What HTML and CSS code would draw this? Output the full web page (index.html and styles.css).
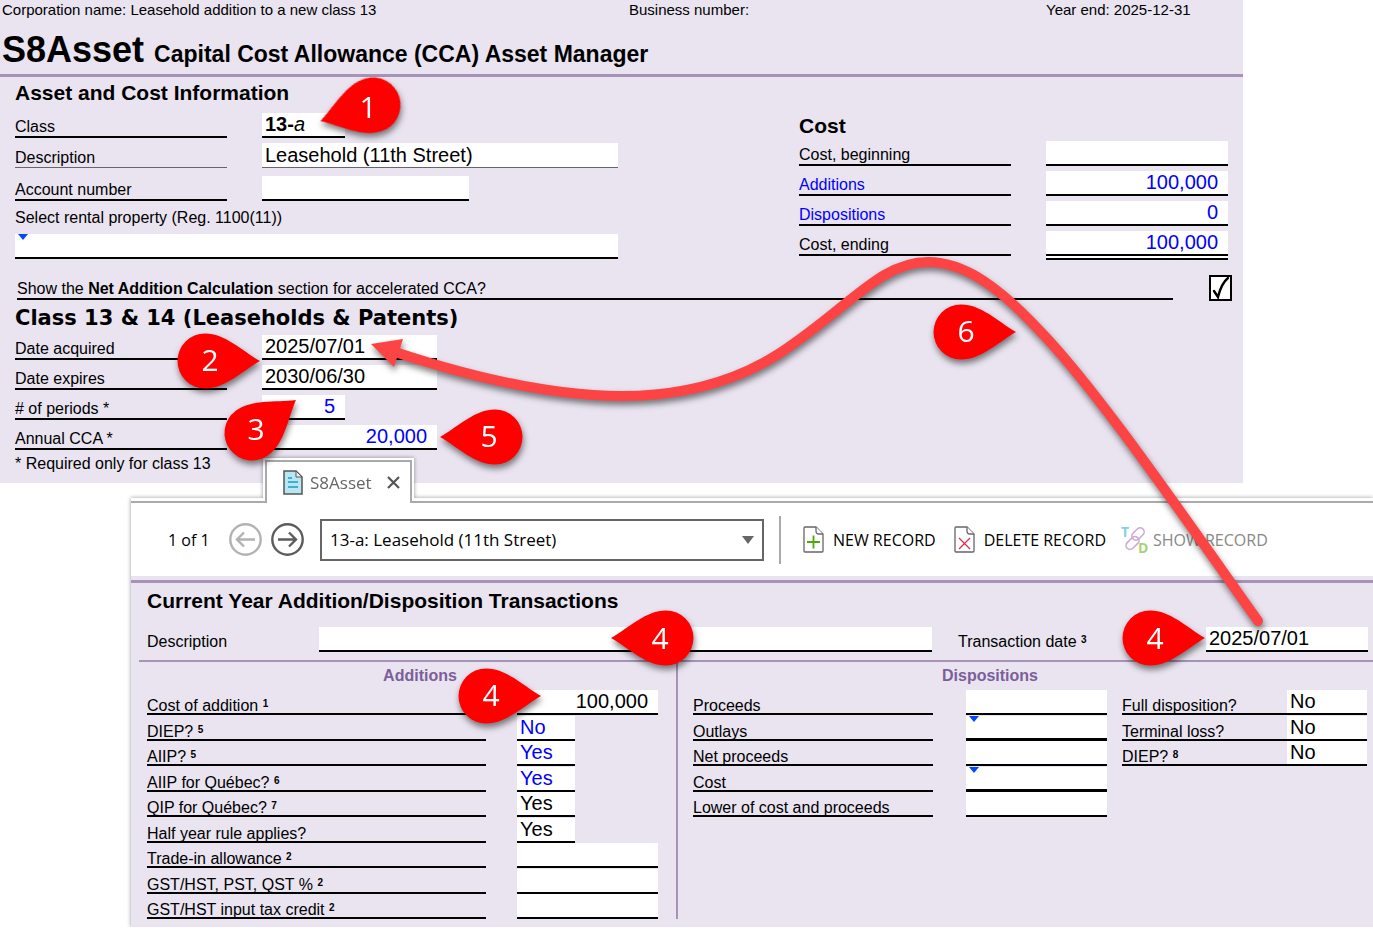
FILE: index.html
```html
<!DOCTYPE html>
<html lang="en">
<head>
    <meta charset="UTF-8">
    <meta name="viewport" content="width=device-width, initial-scale=1.0">
    <title>S8Asset - Capital Cost Allowance (CCA) Asset Manager</title>
    <link rel="stylesheet" href="styles.css">
</head>
<body>
    <main class="form">
        <div class="corp-bar">
            <span>Corporation name: Leasehold addition to a new class 13</span>
            <span>Business number:</span>
            <span>Year end: 2025-12-31</span>
        </div>
        <h1 class="title">S8Asset <small>Capital Cost Allowance (CCA) Asset Manager</small></h1>

        <div class="columns">
            <section class="asset">
                <h2>Asset and Cost Information</h2>
                <div class="row">
                    <span class="label">Class</span>
                    <output class="field short"><b>13-</b><i>a</i></output>
                </div>
                <div class="row thin">
                    <label class="label" for="description">Description</label>
                    <input class="field grow" id="description" value="Leasehold (11th Street)">
                </div>
                <div class="row spaced">
                    <label class="label" for="account">Account number</label>
                    <input class="field account" id="account">
                </div>
                <label class="plain" for="rental">Select rental property (Reg. 1100(11))</label>
                <div class="expand">
                    <select class="field" id="rental"><option></option></select>
                </div>
            </section>

            <section class="cost">
                <h2>Cost</h2>
                <div class="row">
                    <label class="label" for="cost-begin">Cost, beginning</label>
                    <input class="field grow number" id="cost-begin">
                </div>
                <div class="row">
                    <a class="label" href="#additions">Additions</a>
                    <input class="field grow number blue" aria-label="Additions" value="100,000">
                </div>
                <div class="row">
                    <a class="label" href="#dispositions">Dispositions</a>
                    <input class="field grow number blue" aria-label="Dispositions" value="0">
                </div>
                <div class="row">
                    <label class="label" for="cost-end">Cost, ending</label>
                    <input class="field grow number blue total" id="cost-end" value="100,000">
                </div>
            </section>
        </div>

        <div class="net-addition">
            <label for="net">Show the <b>Net Addition Calculation</b> section for accelerated CCA?</label>
            <span class="check">
                <input type="checkbox" id="net" checked>
                <svg viewBox="0 0 24 26" width="24" height="26"><path d="M5 16l4 6C11 14 14 7 19 3" fill="none" stroke="#000" stroke-width="2.4" stroke-linecap="round"/></svg>
            </span>
        </div>

        <section class="leasehold">
            <h2 class="wide">Class 13 &amp; 14 (Leaseholds &amp; Patents)</h2>
            <div class="row">
                <label class="label" for="acquired">Date acquired</label>
                <input class="field date" id="acquired" value="2025/07/01">
            </div>
            <div class="row">
                <label class="label" for="expires">Date expires</label>
                <input class="field date" id="expires" value="2030/06/30">
            </div>
            <div class="row">
                <label class="label" for="periods"># of periods *</label>
                <input class="field short number blue" id="periods" value="5">
            </div>
            <div class="row">
                <label class="label" for="annual">Annual CCA *</label>
                <input class="field date number blue" id="annual" value="20,000">
            </div>
            <p class="note">* Required only for class 13</p>
        </section>
    </main>

    <div class="window">
        <div class="tab">
            <div class="tab-inner">
                <svg width="20" height="25" viewBox="0 0 20 25"><path d="M1 1h12l6 6v17H1z" fill="#b9e6f3" stroke="#555" stroke-width="1.5"/><path d="M13 1v6h6z" fill="#e8f6fa" stroke="#555"/><path d="M5 8h4M5 12h10M5 17h10" stroke="#189cc4" stroke-width="1.4"/></svg>
                <span>S8Asset</span>
                <button class="icon-button" aria-label="Close tab">
                    <svg width="13" height="13" viewBox="0 0 13 13"><path d="M1 1l11 11M12 1L1 12" stroke="#555" stroke-width="2.2"/></svg>
                </button>
            </div>
        </div>

        <div class="window-body">
            <div class="toolbar">
                <span class="counter">1 of 1</span>
                <button class="icon-button previous" aria-label="Previous record" disabled>
                    <svg width="33" height="33" viewBox="0 0 33 33" fill="none" stroke="#b2b2b2" stroke-width="2.400"><circle cx="16.500" cy="16.500" r="15.200"/><path d="M26 16.500H8M15 9.500l-7 7 7 7"/></svg>
                </button>
                <button class="icon-button next" aria-label="Next record">
                    <svg width="33" height="33" viewBox="0 0 33 33" fill="none" stroke="#5c5c5c" stroke-width="2.400"><circle cx="16.500" cy="16.500" r="15.200"/><path d="M7 16.500h18M18 9.500l7 7-7 7"/></svg>
                </button>
                <div class="picker">
                    <select aria-label="Record"><option>13-a: Leasehold (11th Street)</option></select>
                </div>
                <div class="separator"></div>
                <button class="tool">
                    <svg width="21" height="27" viewBox="0 0 21 27" fill="#fff" stroke="#666" stroke-width="1.3"><path d="M1 2q0-1 1-1h11l7 7v17q0 1-1 1H2q-1 0-1-1z"/><path d="M13 1v4q0 3 3 3h4"/><path d="M4 16h13M10.500 9.500v13" stroke="#4ea80a" stroke-width="1.8"/></svg>
                    NEW RECORD
                </button>
                <button class="tool">
                    <svg width="21" height="27" viewBox="0 0 21 27" fill="#fff" stroke="#666" stroke-width="1.3"><path d="M1 2q0-1 1-1h11l7 7v17q0 1-1 1H2q-1 0-1-1z"/><path d="M13 1v4q0 3 3 3h4"/><path d="M5 12l11 11M16 12L5 23" stroke="#e0304e" stroke-width="1.3"/></svg>
                    DELETE RECORD
                </button>
                <button class="tool show" disabled>
                    <svg width="28" height="30" viewBox="0 0 28 30">
                        <g fill="none" stroke="#cfa9d6" stroke-width="1.6"><rect x="10" y="5" width="14" height="8" rx="4" transform="rotate(-45 17 9)"/><rect x="4" y="14" width="15" height="8" rx="4" transform="rotate(-45 11.500 18)"/></g>
                        <text x="0" y="12" class="glyph" fill="#83cfe9">T</text>
                        <text x="17" y="28" class="glyph" fill="#a6d377">D</text>
                    </svg>
                    SHOW RECORD
                </button>
            </div>

            <section class="transactions">
                <h2>Current Year Addition/Disposition Transactions</h2>
                <div class="transaction-row">
                    <label class="plain" for="trans-description">Description</label>
                    <input class="field" id="trans-description">
                    <label class="plain date-label" for="trans-date">Transaction date <sup>3</sup></label>
                    <input class="field" id="trans-date" value="2025/07/01">
                </div>

                <div class="split">
                    <div class="additions" id="additions">
                        <h3>Additions</h3>
                        <div class="rows">
                            <div class="row"><label class="label" for="a1">Cost of addition <sup>1</sup></label><input class="field number" id="a1" value="100,000"></div>
                            <div class="row"><label class="label" for="a2">DIEP? <sup>5</sup></label><input class="field answer blue" id="a2" value="No"></div>
                            <div class="row"><label class="label" for="a3">AIIP? <sup>5</sup></label><input class="field answer blue" id="a3" value="Yes"></div>
                            <div class="row"><label class="label" for="a4">AIIP for Québec? <sup>6</sup></label><input class="field answer blue" id="a4" value="Yes"></div>
                            <div class="row"><label class="label" for="a5">QIP for Québec? <sup>7</sup></label><input class="field answer" id="a5" value="Yes"></div>
                            <div class="row"><label class="label" for="a6">Half year rule applies?</label><input class="field answer" id="a6" value="Yes"></div>
                            <div class="row"><label class="label" for="a7">Trade-in allowance <sup>2</sup></label><input class="field number" id="a7"></div>
                            <div class="row"><label class="label" for="a8">GST/HST, PST, QST % <sup>2</sup></label><input class="field number" id="a8"></div>
                            <div class="row"><label class="label" for="a9">GST/HST input tax credit <sup>2</sup></label><input class="field number" id="a9"></div>
                        </div>
                    </div>

                    <div class="dispositions" id="dispositions">
                        <h3>Dispositions</h3>
                        <div class="disposition-columns">
                            <div class="rows amounts">
                                <div class="row"><label class="label" for="d1">Proceeds</label><input class="field number" id="d1"></div>
                                <div class="row"><label class="label" for="d2">Outlays</label><div class="expand"><input class="field number subtotal" id="d2"></div></div>
                                <div class="row"><label class="label" for="d3">Net proceeds</label><input class="field number" id="d3"></div>
                                <div class="row"><label class="label" for="d4">Cost</label><div class="expand"><input class="field number subtotal" id="d4"></div></div>
                                <div class="row"><label class="label" for="d5">Lower of cost and proceeds</label><input class="field number" id="d5"></div>
                            </div>
                            <div class="rows flags">
                                <div class="row"><label class="label" for="f1">Full disposition?</label><input class="field" id="f1" value="No"></div>
                                <div class="row"><label class="label" for="f2">Terminal loss?</label><input class="field" id="f2" value="No"></div>
                                <div class="row"><label class="label" for="f3">DIEP? <sup>8</sup></label><input class="field" id="f3" value="No"></div>
                            </div>
                        </div>
                    </div>
                </div>
            </section>
        </div>
    </div>

    <!-- Numbered callouts and the arrow between the two dates -->
    <svg class="callouts" width="1373" height="931" viewBox="0 0 1373 931">
        <defs>
            <path id="drop" d="M-55 0C-36-11-20-27.500 0-27.500A27.500 27.500 0 0 1 0 27.500C-20 27.500-36 11-55 0z"/>
        </defs>
        <g class="arrow">
            <path class="arrow-line" d="M1258 621C1170 497 1095 388 1040 331C1000 288 965 262 928 262C880 262 850 307 780 353C735 382 680 396 622 396C560 396 480 380 395 352"/>
            <path class="arrow-head" d="M371 344l32-5-9 28z"/>
        </g>
        <g class="drops">
            <use href="#drop" transform="translate(373 105) rotate(-17)"/>
            <use href="#drop" transform="translate(205 361) rotate(180)"/>
            <use href="#drop" transform="translate(252 433) rotate(143)"/>
            <use href="#drop" transform="translate(495 437)"/>
            <use href="#drop" transform="translate(961 332) rotate(180)"/>
            <use href="#drop" transform="translate(666 638)"/>
            <use href="#drop" transform="translate(1150 638) rotate(180)"/>
            <use href="#drop" transform="translate(486 696) rotate(180)"/>
        </g>
        <g class="numbers">
            <text x="368" y="118">1</text>
            <text x="210" y="371">2</text>
            <text x="256" y="440">3</text>
            <text x="489" y="447">5</text>
            <text x="966" y="342">6</text>
            <text x="660" y="649">4</text>
            <text x="1155" y="649">4</text>
            <text x="491" y="706">4</text>
        </g>
    </svg>
</body>
</html>
```

FILE: styles.css
```css
* {
    box-sizing: border-box;
}
body {
    margin: 0;
    position: relative;
    background: #fff;
    color: #000;
    font: 16px/18px "Liberation Sans", Arial, sans-serif;
}
h1, h2, h3, p {
    margin: 0;
}
h2 {
    font-size: 21px;
    line-height: 24px;
}
h2.wide {
    font-family: "DejaVu Sans", sans-serif;
    font-size: 21px;
}
button {
    border: 0;
    padding: 0;
    background: none;
    color: inherit;
    font: inherit;
}
svg {
    display: block;
}
sup {
    font-size: 10px;
    font-weight: bold;
    line-height: 0;
    vertical-align: 4px;
}

/* Main form */
.form {
    margin-right: 130px;
    padding-bottom: 10px;
    background: #e9e4f0;
}
.corp-bar {
    display: grid;
    grid-template-columns: 627fr 417fr 197fr;
    padding-left: 2px;
    font-size: 15px;
    line-height: 20px;
}
.title {
    padding: 9px 2px 3px;
    border-bottom: 3px solid #a792b8;
    font-size: 36px;
    line-height: 42px;
}
.title small {
    font-size: 23px;
    line-height: 1;
}
.columns {
    display: flex;
    justify-content: space-between;
    padding: 4px 15px 0;
}
.asset {
    width: 603px;
}
.asset h2 {
    margin-bottom: 8px;
}
.cost {
    width: 429px;
    padding-top: 33px;
}
.cost h2 {
    margin-bottom: 3px;
}

/* Label and field pairs */
.row {
    display: flex;
    align-items: flex-end;
    gap: 35px;
    margin-bottom: 5px;
}
.row.spaced {
    margin-top: 8px;
    margin-bottom: 8px;
}
.label {
    flex: none;
    width: 212px;
    border-bottom: 2px solid #000;
    text-decoration: none;
}
a.label {
    color: #00f;
}
a.label, span.label {
    display: block;
}
.plain {
    display: block;
}
.asset .plain {
    margin-bottom: 7px;
}
.field {
    display: block;
    width: 100%;
    height: 25px;
    margin: 0;
    padding: 0 3px;
    border: 0;
    border-bottom: 2px solid #000;
    border-radius: 0;
    outline: 0;
    background: #fff;
    color: #000;
    font: 20px/23px "Liberation Sans", Arial, sans-serif;
    appearance: none;
}
.thin .label, .thin .field {
    border-bottom: 1px solid #666;
}
.field.grow {
    flex: 1;
    min-width: 0;
}
.field.short {
    width: 83px;
}
.field.account {
    width: 207px;
}
.field.date {
    width: 175px;
}
.field.number {
    padding-right: 10px;
    text-align: right;
}
.field.blue {
    color: #00f;
}
.field.subtotal {
    border-bottom-width: 3px;
}
.field.total {
    height: 29px;
    margin-bottom: -4px;
    border-bottom: 6px double #000;
}
.expand {
    position: relative;
}
.expand::before {
    content: "";
    position: absolute;
    top: 0;
    left: 3px;
    border: 5px solid transparent;
    border-top: 6px solid #0047ff;
    border-bottom: 0;
}

.net-addition {
    display: flex;
    align-items: flex-start;
    gap: 36px;
    margin-top: 14px;
    padding: 0 10px 0 17px;
}
.net-addition label {
    flex: 1;
    padding-top: 5px;
    border-bottom: 2px solid #000;
}
.check {
    position: relative;
    width: 24px;
    height: 26px;
}
.check input {
    width: 23px;
    height: 26px;
    margin: 0;
    border: 2px solid #000;
    background: #fff;
    appearance: none;
}
.check svg {
    position: absolute;
    top: 0;
    left: 0;
    pointer-events: none;
}
.leasehold {
    padding: 5px 15px 0;
}
.leasehold h2 {
    margin-bottom: 5px;
}

/* Record window on top of the form */
.window {
    position: relative;
    margin: -25px 0 0 131px;
    color: #000;
    filter: drop-shadow(0 0 2px rgba(0, 0, 0, 0.4));
}
.tab {
    position: relative;
    z-index: 1;
    width: 151px;
    height: 40px;
    margin-left: 132px;
    padding: 2px 2px 0;
    background: #fff;
}
.tab-inner {
    display: flex;
    align-items: center;
    height: 43px;
    padding-left: 16px;
    border: 2px solid #aaa;
    border-bottom: 0;
    background: #fff;
    color: #666;
    font: 17px/24px "Open Sans", "Noto Sans", sans-serif;
}
.tab-inner span {
    flex: 1;
    padding-left: 7px;
}
.tab-inner .icon-button {
    margin-right: 10px;
}
.window-body {
    padding-top: 3px;
    background: #fff;
}
.toolbar {
    display: flex;
    align-items: center;
    height: 75px;
    padding-left: 37px;
    border-top: 2px solid #aaa;
    font: 16px/24px "Open Sans", "Noto Sans", sans-serif;
}
.counter {
    width: 61px;
}
.next {
    margin: 0 16px 0 9px;
}
.picker {
    position: relative;
    width: 444px;
}
.picker select {
    width: 100%;
    height: 42px;
    padding: 0 8px;
    border: 2px solid #666;
    border-radius: 0;
    background: #fff;
    color: #000;
    font: inherit;
    font-size: 17px;
    appearance: none;
}
.picker::after {
    content: "";
    position: absolute;
    top: 17px;
    right: 10px;
    border: 6px solid transparent;
    border-top: 8px solid #666;
    border-bottom: 0;
}
.separator {
    width: 2px;
    height: 48px;
    margin: 0 22px 0 15px;
    background: #aaa;
}
.tool {
    display: flex;
    align-items: center;
    gap: 9px;
    margin-right: 18px;
    white-space: nowrap;
}
.tool.show {
    gap: 4px;
    margin-left: -3px;
    color: #888;
}
.tool svg {
    overflow: visible;
}
.glyph {
    font: bold 14px "Open Sans", sans-serif;
}

.transactions {
    padding: 0 0 8px 8px;
    background: linear-gradient(#e9e4f0 4px, #a792b8 4px, #a792b8 7px, #e9e4f0 7px);
}
.transactions h2 {
    padding: 13px 0 0 8px;
}
.transaction-row {
    display: grid;
    grid-template-columns: 172px 613px 274px 1fr;
    align-items: end;
    height: 47px;
    padding: 0 5px 8px 8px;
}
.transaction-row .plain {
    padding-bottom: 1px;
}
.transaction-row .date-label {
    padding-left: 26px;
}
.split {
    display: grid;
    grid-template-columns: 539px 1fr;
    border-top: 2px solid #a792b8;
}
.additions {
    padding-left: 8px;
    border-right: 2px solid #a792b8;
}
.dispositions {
    padding: 0 6px 0 15px;
}
h3 {
    padding: 5px 0;
    color: #7b5f9a;
    font-size: 16px;
    line-height: 18px;
    text-align: center;
}
.additions h3 {
    padding-left: 17px;
}
.dispositions h3 {
    padding-right: 80px;
}
.rows .row {
    gap: 0;
    height: 25px;
    margin: 0;
}
.rows .row:nth-child(even) {
    height: 26px;
}
.rows .label {
    width: 339px;
    line-height: 14px;
}
.rows .field {
    width: 141px;
}
.additions .field {
    margin-left: 31px;
}
.rows .field.answer {
    width: 58px;
}
.disposition-columns {
    display: flex;
    justify-content: space-between;
}
.amounts .label {
    width: 240px;
    margin-right: 33px;
}
.flags .label {
    width: 165px;
}
.flags .field {
    width: 80px;
}

/* Callouts */
.callouts {
    position: absolute;
    top: 0;
    left: 0;
    pointer-events: none;
}
.arrow, .drops {
    filter: drop-shadow(1px 4px 3px rgba(0, 0, 0, 0.5));
}
.arrow-line {
    fill: none;
    stroke: #fd4444;
    stroke-width: 10px;
    stroke-linecap: round;
}
.arrow-head {
    fill: #fd4444;
}
.drops {
    fill: #f00;
}
.numbers {
    fill: #fff;
    font: 30px "Open Sans", "Noto Sans", sans-serif;
    text-anchor: middle;
}
```
